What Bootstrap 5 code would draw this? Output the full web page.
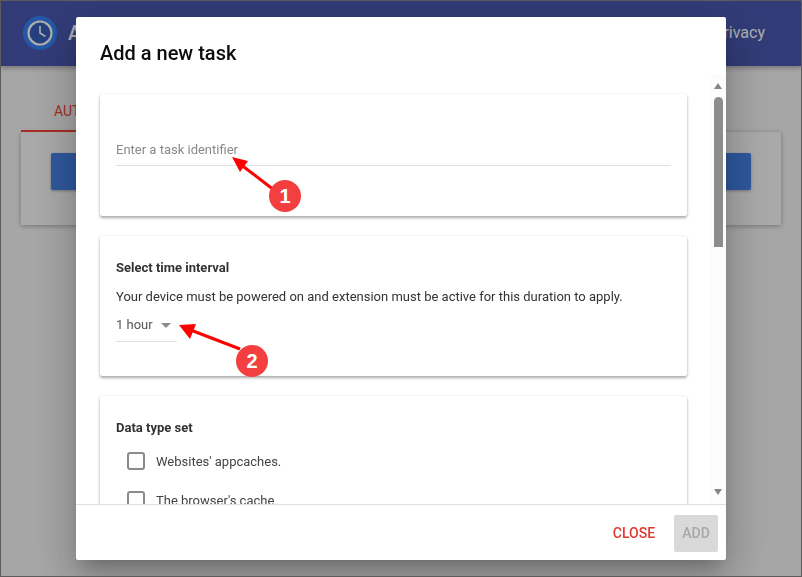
<!DOCTYPE html>
<html lang="en">
<head>
<meta charset="utf-8">
<title>Add a new task</title>
<link href="https://cdn.jsdelivr.net/npm/bootstrap@5.3.0/dist/css/bootstrap.min.css" rel="stylesheet">
<style>
html,body{height:100%;}
body{font-family:Roboto,"Liberation Sans",sans-serif;background:#f5f5f5;overflow:hidden;}
.page-frame{position:fixed;inset:0;border:1px solid #5c5c5c;z-index:30;pointer-events:none;}
.app-bar{height:66px;background:#4a58b0;padding:0 37px 0 23px;box-shadow:0 2px 5px rgba(0,0,0,.3);}
.app-logo{width:34px;height:34px;}
.app-name{font-size:20px;font-weight:500;color:#fff;margin-left:11px;}
.app-link{font-size:16px;color:#fff;}
.tab-zone{padding:0 21px;}
.tab-head{height:66px;}
.tab-item{width:140px;height:66px;color:#f44336;font-size:14px;padding-top:35px;padding-left:33px;border-bottom:2px solid #f44336;}
.tab-panel{height:93px;background:#f9f9f9;padding:21px 30px;box-shadow:0 1px 5px rgba(0,0,0,.3);}
.tab-action{height:37px;background:#4582e8;border-radius:2px;box-shadow:0 1px 3px rgba(0,0,0,.3);}
.scrim{position:fixed;inset:0;background:rgba(0,0,0,.32);z-index:10;}
.dialog-box{position:fixed;left:76px;top:17px;width:650px;height:543px;z-index:20;border:0;border-radius:2px;overflow:hidden;box-shadow:0 11px 15px -7px rgba(0,0,0,.2),0 24px 38px 3px rgba(0,0,0,.14),0 9px 46px 8px rgba(0,0,0,.12);}
.dialog-head{height:57px;padding:22px 24px 0;border:0;align-items:flex-start;}
.dialog-title{font-size:20px;line-height:29px;font-weight:500;color:#0c0c0c;margin:0;}
.dialog-main{height:430px;min-height:0;flex:0 0 auto;padding:0;}
.scroll-view{overflow:hidden;width:635px;padding:20px 24px 0;}
.task-card{width:587px;margin-bottom:20px;border:0;border-radius:2px;box-shadow:0 2px 3px rgba(0,0,0,.32),0 0 2px rgba(0,0,0,.1);flex:0 0 auto;}
.task-card .card-body{padding:16px;}
.id-card{height:122px;}
.id-field{margin-top:30px;height:26px;border:0;border-bottom:1px solid #e0e0e0;border-radius:0;padding:0 0 7px;font-size:13px;box-shadow:none;}
.id-field::placeholder{color:#8a8a8a;opacity:1;}
.time-card{height:140px;}
.sect-title{font-size:13px;font-weight:700;line-height:16px;color:#333;margin:0;}
.sect-note{font-size:13px;line-height:16px;color:#333;margin:13px 0 0;}
.hour-select{width:61px;height:28px;margin-top:9px;border-bottom:1px solid #e0e0e0;font-size:13px;color:#555;padding-bottom:6px;line-height:16px;}
.hour-caret{width:0;height:0;border-left:5px solid transparent;border-right:5px solid transparent;border-top:5px solid #8a8a8a;margin-left:8px;margin-top:2px;}
.data-card{height:200px;}
.check-row{margin:12px 0 0 12px;height:27px;font-size:13px;color:#444;}
.check-row+.check-row{margin-top:12px;}
.check-row input{width:18px;height:18px;margin:-2px 11px 0 -1px;border:2px solid #8a8a8a;border-radius:2px;box-shadow:none;flex:0 0 auto;}
.bar-col{width:15px;background:#fcfcfc;padding:9px 3px 9px;}
.bar-up,.bar-down{width:0;height:0;border-left:4.5px solid transparent;border-right:4.5px solid transparent;flex:0 0 auto;}
.bar-up{border-bottom:6px solid #858585;}
.bar-down{border-top:6px solid #858585;margin-top:auto;}
.bar-thumb{width:9px;height:150px;background:#8c8c8c;border-radius:5px 5px 0 0;margin-top:8px;}
.dialog-foot{height:56px;border-top:1px solid #e0e0e0;padding:2px 8px 0 0;gap:18px;flex-wrap:nowrap;}
.dialog-foot>*{margin:0;}
.act-close{font-size:14px;font-weight:500;color:#e0392f;padding:0;border:0;margin-right:0;width:44px;}
.btn.act-add,.btn.act-add:disabled{width:44px;height:37px;font-size:14px;font-weight:500;padding:0;background:#d9d9d9;color:#a8a8a8;border:0;border-radius:2px;opacity:1;}
.note-layer{position:fixed;left:0;top:0;z-index:25;pointer-events:none;}
.note-num{position:fixed;width:32px;height:32px;border-radius:50%;background:#f33f3f;color:#fff;font-weight:700;font-size:20px;line-height:32px;text-align:center;z-index:26;font-family:"Liberation Sans",sans-serif;}
.note-one{left:269px;top:180px;}
.note-two{left:236px;top:345px;}
</style>
</head>
<body>
<nav class="navbar app-bar d-flex justify-content-between flex-nowrap">
  <div class="d-flex align-items-center">
    <svg class="app-logo" viewBox="0 0 34 34">
      <circle cx="17" cy="17" r="17" fill="#3582f5"/>
      <circle cx="17" cy="17" r="11.5" fill="#375fbc" stroke="#fff" stroke-width="2.2"/>
      <path d="M17 10v7l5.5 3.5" fill="none" stroke="#fff" stroke-width="1.6"/>
    </svg>
    <span class="app-name">Auto Clear</span>
  </div>
  <span class="app-link">Privacy</span>
</nav>
<div class="tab-zone">
  <div class="tab-head d-flex"><div class="tab-item">AUTO</div></div>
  <div class="tab-panel"><div class="tab-action"></div></div>
</div>
<div class="scrim"></div>

<div class="modal-content dialog-box d-flex flex-column bg-white">
  <div class="modal-header dialog-head"><h5 class="dialog-title">Add a new task</h5></div>
  <div class="modal-body dialog-main d-flex">
    <div class="scroll-view d-flex flex-column">
      <div class="card task-card id-card">
        <div class="card-body">
          <input class="form-control id-field" type="text" placeholder="Enter a task identifier">
        </div>
      </div>
      <div class="card task-card time-card">
        <div class="card-body">
          <p class="sect-title mt-2">Select time interval</p>
          <p class="sect-note">Your device must be powered on and extension must be active for this duration to apply.</p>
          <div class="hour-select d-flex align-items-center"><span>1 hour</span><span class="hour-caret"></span></div>
        </div>
      </div>
      <div class="card task-card data-card">
        <div class="card-body">
          <p class="sect-title mt-2">Data type set</p>
          <label class="check-row d-flex align-items-center"><input class="form-check-input" type="checkbox">Websites' appcaches.</label>
          <label class="check-row d-flex align-items-center"><input class="form-check-input" type="checkbox">The browser's cache</label>
        </div>
      </div>
    </div>
    <div class="bar-col d-flex flex-column">
      <div class="bar-up"></div>
      <div class="bar-thumb"></div>
      <div class="bar-down"></div>
    </div>
  </div>
  <div class="modal-footer dialog-foot">
    <button class="btn act-close" type="button">CLOSE</button>
    <button class="btn act-add" type="button" disabled>ADD</button>
  </div>
</div>

<svg class="note-layer" width="802" height="577" viewBox="0 0 802 577">
  <line x1="274" y1="190" x2="240" y2="164" stroke="#f00" stroke-width="3"/>
  <polygon points="232,157 248,161 240,172" fill="#f00"/>
  <line x1="240" y1="349" x2="188" y2="329" stroke="#f00" stroke-width="3"/>
  <polygon points="179,325 196,324 190,339" fill="#f00"/>
</svg>
<div class="note-num note-one">1</div>
<div class="note-num note-two">2</div>
<div class="page-frame"></div>
<script src="https://cdn.jsdelivr.net/npm/bootstrap@5.3.0/dist/js/bootstrap.bundle.min.js"></script>
</body>
</html>
